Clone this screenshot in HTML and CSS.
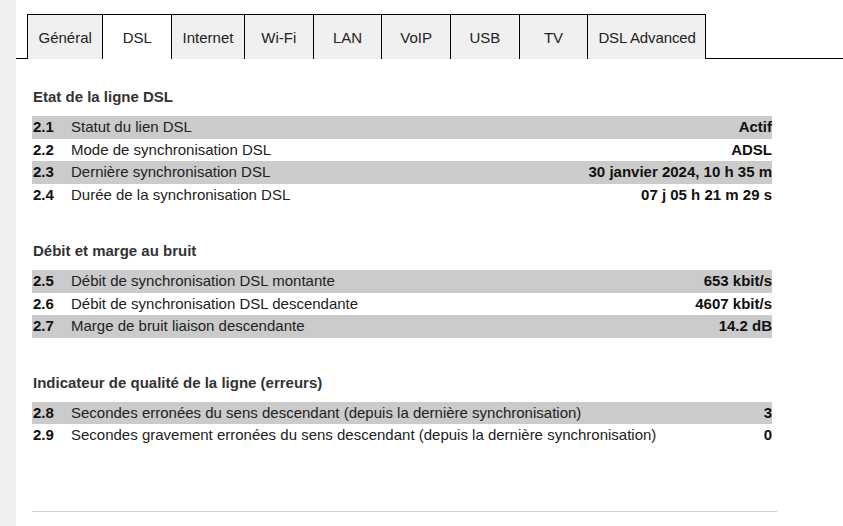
FILE: index.html
```html
<!DOCTYPE html>
<html lang="fr">
<head>
<meta charset="utf-8">
<title>DSL</title>
<link rel="stylesheet" href="styles.css">
</head>
<body>
<div class="side"></div>
<div class="main">
  <div class="tabs">
    <div class="tab-gap"></div>
    <div class="tab">Général</div>
    <div class="tab active">DSL</div>
    <div class="tab">Internet</div>
    <div class="tab">Wi-Fi</div>
    <div class="tab">LAN</div>
    <div class="tab">VoIP</div>
    <div class="tab">USB</div>
    <div class="tab">TV</div>
    <div class="tab tab-last">DSL Advanced</div>
    <div class="tab-fill"></div>
  </div>
  <div class="content">
    <section class="sect">
      <h2 class="sect-title">Etat de la ligne DSL</h2>
      <div class="row odd"><span class="num">2.1</span><span class="lbl">Statut du lien DSL</span><span class="val">Actif</span></div>
      <div class="row"><span class="num">2.2</span><span class="lbl">Mode de synchronisation DSL</span><span class="val">ADSL</span></div>
      <div class="row odd"><span class="num">2.3</span><span class="lbl">Dernière synchronisation DSL</span><span class="val">30 janvier 2024, 10 h 35 m</span></div>
      <div class="row"><span class="num">2.4</span><span class="lbl">Durée de la synchronisation DSL</span><span class="val">07 j 05 h 21 m 29 s</span></div>
    </section>
    <section class="sect">
      <h2 class="sect-title">Débit et marge au bruit</h2>
      <div class="row odd"><span class="num">2.5</span><span class="lbl">Débit de synchronisation DSL montante</span><span class="val">653 kbit/s</span></div>
      <div class="row"><span class="num">2.6</span><span class="lbl">Débit de synchronisation DSL descendante</span><span class="val">4607 kbit/s</span></div>
      <div class="row odd"><span class="num">2.7</span><span class="lbl">Marge de bruit liaison descendante</span><span class="val">14.2 dB</span></div>
    </section>
    <section class="sect">
      <h2 class="sect-title">Indicateur de qualité de la ligne (erreurs)</h2>
      <div class="row odd"><span class="num">2.8</span><span class="lbl">Secondes erronées du sens descendant (depuis la dernière synchronisation)</span><span class="val">3</span></div>
      <div class="row"><span class="num">2.9</span><span class="lbl">Secondes gravement erronées du sens descendant (depuis la dernière synchronisation)</span><span class="val">0</span></div>
    </section>
    <hr class="rule">
  </div>
</div>
</body>
</html>
```
FILE: styles.css
```css
html, body {
  margin: 0;
  padding: 0;
  background: #fff;
}
body {
  display: flex;
  min-height: 526px;
  font-family: "Liberation Sans", Arial, sans-serif;
  color: #222;
  overflow: hidden;
}
.side {
  width: 16px;
  flex: none;
  background: #efefef;
}
.main {
  flex: 1;
  min-width: 0;
}
.tabs {
  display: flex;
  align-items: stretch;
  padding-top: 14px;
  height: 45px;
  box-sizing: content-box;
}
.tab-gap {
  width: 11px;
  flex: none;
  border-bottom: 1px solid #000;
}
.tab-fill {
  flex: 1;
  border-bottom: 1px solid #000;
}
.tab {
  flex: none;
  min-width: 68.7px;
  box-sizing: border-box;
  padding: 0 10.5px 0;
  border-top: 1px solid #000;
  border-left: 1px solid #000;
  background: #f0f0f0;
  font-size: 15px;
  color: #222;
  display: flex;
  align-items: center;
  justify-content: center;
}
.tab.active {
  background: #fff;
}
.tab-last {
  border-right: 1px solid #000;
  padding: 0 9px 0 10px;
  letter-spacing: -0.1px;
}
.content {
  padding: 0 0 0 16px;
  width: 740px;
}
.sect {
  margin-top: 35px;
}
.sect:first-child {
  margin-top: 28px;
}
.sect-title {
  margin: 0 0 9px 1px;
  font-size: 15px;
  line-height: 20px;
  font-weight: bold;
  color: #333;
}
.row {
  display: grid;
  grid-template-columns: 38px 1fr auto;
  height: 22.5px;
  line-height: 22.5px;
  font-size: 15px;
  padding-left: 1px;
}
.row.odd {
  background: #cbcbcb;
}
.num {
  font-weight: bold;
  color: #111;
}
.lbl {
  color: #222;
  white-space: nowrap;
}
.val {
  font-weight: bold;
  color: #111;
  text-align: right;
  white-space: nowrap;
}
.rule {
  margin: 64px 0 0;
  width: 745px;
  border: 0;
  border-top: 1px solid #d0d0d0;
  height: 0;
}
```
